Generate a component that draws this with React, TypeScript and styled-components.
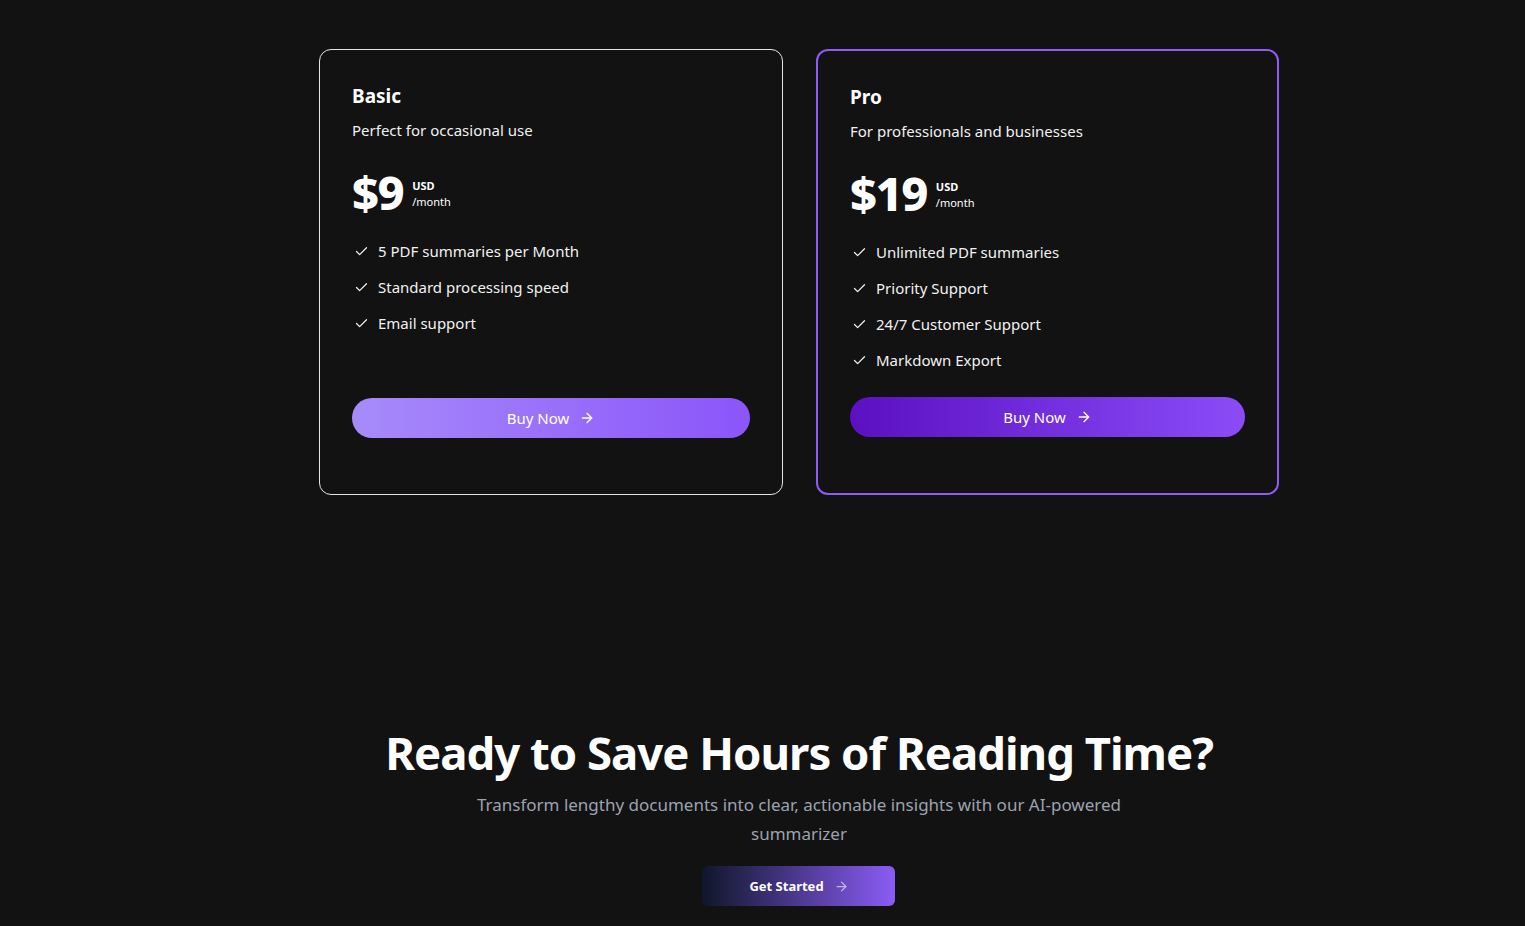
import React from "react";
import styled, { createGlobalStyle } from "styled-components";
import { Check, ArrowRight } from "lucide-react";

const GlobalStyle = createGlobalStyle`
  html, body {
    margin: 0;
    padding: 0;
    background: #121212;
    color: #fff;
    font-family: "Noto Sans", "Open Sans", sans-serif;
  }
`;

interface IPlan {
  name: string;
  description: string;
  price: number;
  features: string[];
  pro?: boolean;
}

const plans: IPlan[] = [
  {
    name: "Basic",
    description: "Perfect for occasional use",
    price: 9,
    features: [
      "5 PDF summaries per Month",
      "Standard processing speed",
      "Email support",
    ],
  },
  {
    name: "Pro",
    description: "For professionals and businesses",
    price: 19,
    features: [
      "Unlimited PDF summaries",
      "Priority Support",
      "24/7 Customer Support",
      "Markdown Export",
    ],
    pro: true,
  },
];

const Page = styled.div`
  min-height: 926px;
  padding-left: 73px;
  box-sizing: border-box;
  display: flex;
  flex-direction: column;
  align-items: center;
`;

const PricingGrid = styled.section`
  display: grid;
  grid-template-columns: 464px 463px;
  gap: 33px;
  margin-top: 49px;
`;

const Card = styled.div<{ $pro?: boolean }>`
  display: flex;
  flex-direction: column;
  box-sizing: border-box;
  height: 446px;
  padding: 32px 32px 56px;
  border: ${(p) => (p.$pro ? "2px solid #8b5cf6" : "1px solid #e5e5e5")};
  border-radius: 12px;
  background: #121212;
`;

const PlanName = styled.h3`
  margin: 0;
  font-size: 19px;
  line-height: 28px;
  font-weight: 700;
`;

const PlanDesc = styled.p`
  margin: 8px 0 0;
  font-size: 15px;
  line-height: 24px;
  color: #f1f1f1;
`;

const PriceRow = styled.div`
  display: flex;
  align-items: flex-start;
  gap: 9px;
  margin-top: 22px;
`;

const Amount = styled.span`
  font-size: 47px;
  line-height: 56px;
  font-weight: 800;
  letter-spacing: -1.5px;
`;

const PriceMeta = styled.div`
  display: flex;
  flex-direction: column;
  padding-top: 14px;
  font-size: 11px;
  line-height: 16px;
`;

const Currency = styled.span`
  font-weight: 700;
`;

const FeatureList = styled.ul`
  list-style: none;
  margin: 19px 0 0;
  padding: 0;
  display: flex;
  flex-direction: column;
  gap: 12px;
`;

const Feature = styled.li`
  display: flex;
  align-items: center;
  gap: 9px;
  font-size: 15px;
  line-height: 24px;
  color: #f1f1f1;

  svg {
    flex-shrink: 0;
    margin-left: 2px;
  }
`;

const BuyButton = styled.button<{ $pro?: boolean }>`
  margin-top: auto;
  height: 40px;
  width: 100%;
  border: none;
  border-radius: 999px;
  display: flex;
  align-items: center;
  justify-content: center;
  gap: 10px;
  font-family: inherit;
  font-size: 15px;
  color: #fff;
  cursor: pointer;
  background: ${(p) =>
    p.$pro
      ? "linear-gradient(90deg, #5b10c2 0%, #8b4cf8 100%)"
      : "linear-gradient(90deg, #a78bfa 0%, #8b55fa 100%)"};
`;

const Cta = styled.section`
  display: flex;
  flex-direction: column;
  align-items: center;
  margin-top: 229px;
  text-align: center;
`;

const CtaTitle = styled.h2`
  margin: 0;
  font-size: 45.5px;
  line-height: 56px;
  font-weight: 700;
  letter-spacing: -1px;
`;

const CtaText = styled.p`
  margin: 10px 0 0;
  max-width: 660px;
  font-size: 17px;
  line-height: 29px;
  color: #9ca3af;
`;

const StartButton = styled.button`
  margin-top: 18px;
  width: 193px;
  height: 40px;
  border: none;
  border-radius: 6px;
  display: flex;
  align-items: center;
  justify-content: center;
  gap: 10px;
  font-family: inherit;
  font-size: 13px;
  font-weight: 700;
  color: #fff;
  cursor: pointer;
  background: linear-gradient(90deg, #0f172a 0%, #8b5cf6 100%);

  svg {
    opacity: 0.6;
  }
`;

const PlanCard: React.FC<{ plan: IPlan }> = ({ plan }) => (
  <Card $pro={plan.pro}>
    <PlanName>{plan.name}</PlanName>
    <PlanDesc>{plan.description}</PlanDesc>
    <PriceRow>
      <Amount>${plan.price}</Amount>
      <PriceMeta>
        <Currency>USD</Currency>
        <span>/month</span>
      </PriceMeta>
    </PriceRow>
    <FeatureList>
      {plan.features.map((f) => (
        <Feature key={f}>
          <Check size={15} strokeWidth={2} />
          {f}
        </Feature>
      ))}
    </FeatureList>
    <BuyButton $pro={plan.pro}>
      Buy Now
      <ArrowRight size={16} strokeWidth={2} />
    </BuyButton>
  </Card>
);

export default function App() {
  return (
    <>
      <GlobalStyle />
      <Page>
        <PricingGrid>
          {plans.map((p) => (
            <PlanCard key={p.name} plan={p} />
          ))}
        </PricingGrid>
        <Cta>
          <CtaTitle>Ready to Save Hours of Reading Time?</CtaTitle>
          <CtaText>
            Transform lengthy documents into clear, actionable insights with
            our AI-powered summarizer
          </CtaText>
          <StartButton>
            Get Started
            <ArrowRight size={15} strokeWidth={2} />
          </StartButton>
        </Cta>
      </Page>
    </>
  );
}
